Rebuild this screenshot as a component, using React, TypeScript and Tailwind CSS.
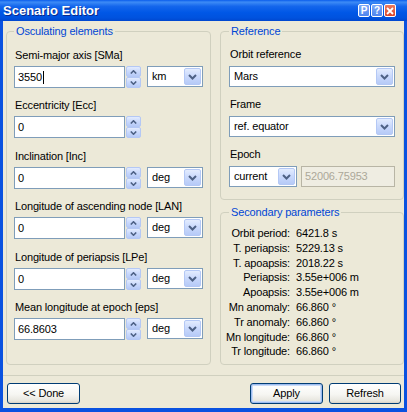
import React from "react";

const btnBlue =
  "rounded-[2px] border border-[#B4C8F5] bg-[linear-gradient(180deg,#E3ECFE_0%,#CBDAFC_45%,#B6CAF7_100%)]";

function ChevDown() {
  return (
    <svg width="9" height="6" viewBox="0 0 9 6">
      <path d="M1 1 L4.5 4.5 L8 1" fill="none" stroke="#4D6185" strokeWidth="2" />
    </svg>
  );
}

function SmallChev({ up }: { up?: boolean }) {
  return (
    <svg width="7" height="4" viewBox="0 0 7 4">
      {up ? (
        <path d="M0.8 3.5 L3.5 0.8 L6.2 3.5" fill="none" stroke="#4D6185" strokeWidth="1.6" />
      ) : (
        <path d="M0.8 0.5 L3.5 3.2 L6.2 0.5" fill="none" stroke="#4D6185" strokeWidth="1.6" />
      )}
    </svg>
  );
}

function Combo({ value, className }: { value: string; className: string }) {
  return (
    <div className={`flex h-[21px] items-stretch border border-[#7F9DB9] bg-white p-[1px] ${className}`}>
      <div className="flex flex-1 items-center whitespace-nowrap pl-[3px] text-black">{value}</div>
      <div className={`flex w-[17px] items-center justify-center ${btnBlue}`}>
        <ChevDown />
      </div>
    </div>
  );
}

function Spin() {
  return (
    <div className="ml-[1px] flex h-[22px] w-[15px] flex-col">
      <div className={`flex flex-1 items-center justify-center ${btnBlue}`}>
        <SmallChev up />
      </div>
      <div className={`flex flex-1 items-center justify-center ${btnBlue}`}>
        <SmallChev />
      </div>
    </div>
  );
}

function Field({
  label,
  value,
  unit,
  caret,
  className,
}: {
  label: string;
  value: string;
  unit?: string;
  caret?: boolean;
  className?: string;
}) {
  return (
    <div className={`flex flex-col ${className ?? ""}`}>
      <div className="h-[14px] whitespace-nowrap pl-[1px] leading-[14px]">{label}</div>
      <div className="mt-[4px] flex items-start">
        <div className="flex h-[22px] w-[111px] items-center border border-[#7F9DB9] bg-white pl-[3px]">
          <span>{value}</span>
          {caret && <span className="ml-[1px] h-[13px] w-px bg-black" />}
        </div>
        <Spin />
        {unit && <Combo value={unit} className="ml-[6px] w-[56px]" />}
      </div>
    </div>
  );
}

function Label({ children }: { children: React.ReactNode }) {
  return <div className="h-[14px] whitespace-nowrap pl-[1px] leading-[14px]">{children}</div>;
}

function XPButton({ children, def, className }: { children: React.ReactNode; def?: boolean; className: string }) {
  return (
    <div
      className={`flex h-[21px] items-center justify-center rounded-[3px] border border-[#003C74] bg-[linear-gradient(180deg,#FFFFFF_0%,#F6F6F2_55%,#E6E5DD_90%,#D6D0C5_100%)] ${
        def ? "shadow-[inset_0_0_0_1px_#9DBCEF,inset_0_0_0_2px_#C9DBF8]" : ""
      } ${className}`}
    >
      {children}
    </div>
  );
}

const secondary: [string, string][] = [
  ["Orbit period:", "6421.8 s"],
  ["T. periapsis:", "5229.13 s"],
  ["T. apoapsis:", "2018.22 s"],
  ["Periapsis:", "3.55e+006 m"],
  ["Apoapsis:", "3.55e+006 m"],
  ["Mn anomaly:", "66.860 °"],
  ["Tr anomaly:", "66.860 °"],
  ["Mn longitude:", "66.860 °"],
  ["Tr longitude:", "66.860 °"],
];

export default function App() {
  return (
    <div className="flex h-[412px] w-[407px] flex-col bg-[#0A52E0] font-['Liberation_Sans',Arial,sans-serif] text-[11px] tracking-[-0.15px] text-black">
      {/* Title bar */}
      <div className="flex h-[21px] items-center bg-[linear-gradient(180deg,#0A5DEC_0%,#3D8BF6_10%,#1466EC_30%,#0057E6_60%,#0052DE_85%,#0047CF_100%)] pl-[3px] pr-[11px]">
        <div className="flex-1 text-[13px] font-bold leading-none tracking-normal text-white [text-shadow:1px_1px_0_#0A2A8A]">
          Scenario Editor
        </div>
        <div className="flex gap-[1px]">
          <div className="flex h-[13px] w-[12px] items-center justify-center rounded-[2px] border border-white bg-[linear-gradient(180deg,#7DA8F7_0%,#4E85EE_100%)] text-[10px] font-bold leading-none text-white">
            P
          </div>
          <div className="flex h-[13px] w-[12px] items-center justify-center rounded-[2px] border border-white bg-[linear-gradient(180deg,#7DA8F7_0%,#4E85EE_100%)] text-[10px] font-bold leading-none text-white">
            ?
          </div>
          <div className="flex h-[13px] w-[12px] items-center justify-center rounded-[2px] border border-white bg-[linear-gradient(180deg,#EC7A5E_0%,#D9452A_100%)]">
            <svg width="8" height="8" viewBox="0 0 8 8">
              <path d="M1 1 L7 7 M7 1 L1 7" stroke="white" strokeWidth="1.8" />
            </svg>
          </div>
        </div>
      </div>

      {/* Body */}
      <div className="mx-[3px] mb-[4px] flex flex-1 flex-col bg-[#ECE9D8]">
        <div className="mt-[4px] flex items-stretch">
          {/* Left group */}
          <fieldset className="ml-[3px] w-[203px] rounded-[4px] border border-[#D0D0BF] px-[7px] pb-[24px]">
            <legend className="px-[2px] leading-[13px] text-[#0046D5]">Osculating elements</legend>
            <div className="flex flex-col pt-[10px]">
              <Field label="Semi-major axis [SMa]" value="3550" unit="km" caret />
              <Field label="Eccentricity [Ecc]" value="0" className="mt-[10px]" />
              <Field label="Inclination [Inc]" value="0" unit="deg" className="mt-[11px]" />
              <Field label="Longitude of ascending node [LAN]" value="0" unit="deg" className="mt-[10px]" />
              <Field label="Longitude of periapsis [LPe]" value="0" unit="deg" className="mt-[11px]" />
              <Field label="Mean longitude at epoch [eps]" value="66.8603" unit="deg" className="mt-[10px]" />
            </div>
          </fieldset>

          {/* Right column */}
          <div className="ml-[9px] mr-[1px] flex w-[184px] flex-col">
            <fieldset className="rounded-[4px] border border-[#D0D0BF] px-[8px] pb-[12px]">
              <legend className="px-[2px] leading-[13px] text-[#0046D5]">Reference</legend>
              <div className="flex flex-col pt-[9px]">
                <Label>Orbit reference</Label>
                <Combo value="Mars" className="mt-[5px] w-[166px]" />
                <div className="mt-[10px]">
                  <Label>Frame</Label>
                </div>
                <Combo value="ref. equator" className="mt-[5px] w-[166px]" />
                <div className="mt-[10px]">
                  <Label>Epoch</Label>
                </div>
                <div className="mt-[5px] flex gap-[4px]">
                  <Combo value="current" className="w-[68px]" />
                  <div className="flex h-[21px] w-[94px] items-center border border-[#B8B5A5] bg-[#EFEDE2] pl-[3px] text-[#ACA899]">
                    52006.75953
                  </div>
                </div>
              </div>
            </fieldset>

            <fieldset className="mt-[6px] flex-1 rounded-[4px] border border-[#D0D0BF] px-[8px]">
              <legend className="px-[2px] leading-[13px] text-[#0046D5]">Secondary parameters</legend>
              <div className="flex flex-col pt-[7px]">
                {secondary.map(([k, v]) => (
                  <div key={k} className="flex h-[14.8px] items-center leading-[14.8px]">
                    <div className="flex w-[61px] justify-end whitespace-nowrap">{k}</div>
                    <div className="ml-[6px] whitespace-nowrap">{v}</div>
                  </div>
                ))}
              </div>
            </fieldset>
          </div>
        </div>

        {/* Separator */}
        <div className="mt-[10px] h-px bg-[#D0D0BF]" />

        {/* Buttons */}
        <div className="mt-[7px] flex items-center">
          <XPButton className="ml-[4px] w-[73px]">&lt;&lt; Done</XPButton>
          <div className="flex-1" />
          <XPButton def className="w-[73px]">
            Apply
          </XPButton>
          <XPButton className="ml-[6px] mr-[3px] w-[72px]">Refresh</XPButton>
        </div>
      </div>
    </div>
  );
}
